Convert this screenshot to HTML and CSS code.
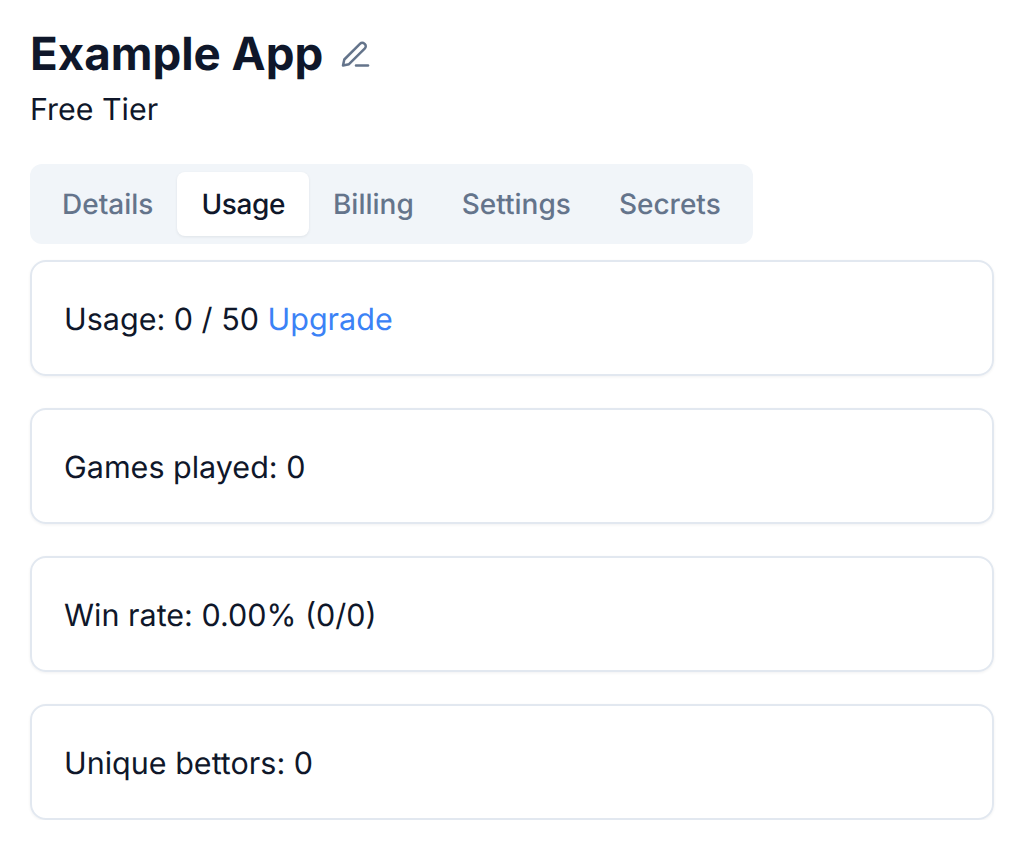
FILE: index.html
```html
<!DOCTYPE html>
<html lang="en">
<head>
<meta charset="utf-8">
<title>Example App</title>
<link rel="stylesheet" href="styles.css">
</head>
<body>
<main class="page">
  <header class="head">
    <div class="title-row">
      <h1 class="title">Example App</h1>
      <svg class="edit" width="30" height="30" viewBox="0 0 30 30" fill="none" stroke="#64748b" stroke-width="2.5" stroke-linecap="round" stroke-linejoin="round" aria-hidden="true">
        <path d="M3 26.5l1.3-6L20.2 4.6a2.9 2.9 0 0 1 4.1 0l.6.6a2.9 2.9 0 0 1 0 4.1L9 25.2z"/>
        <path d="M16 26.5h12"/>
      </svg>
    </div>
    <p class="tier">Free Tier</p>
  </header>
  <nav class="tabs">
    <a class="tab">Details</a>
    <a class="tab active">Usage</a>
    <a class="tab">Billing</a>
    <a class="tab">Settings</a>
    <a class="tab">Secrets</a>
  </nav>
  <section class="cards">
    <div class="card">Usage: 0 / 50 <a class="link">Upgrade</a></div>
    <div class="card">Games played: 0</div>
    <div class="card">Win rate: 0.00% (0/0)</div>
    <div class="card">Unique bettors: 0</div>
  </section>
</main>
</body>
</html>
```
FILE: styles.css
```css
* { box-sizing: border-box; }
html, body { margin: 0; background: #fff; }
body { font-family: Inter, "Liberation Sans", sans-serif; color: #0f172a; text-rendering: geometricPrecision; }
.page { padding: 24px 26px 0 30px; }
.title-row { display: flex; align-items: center; gap: 17px; height: 60px; padding-top: 2px; }
.title { margin: 0; font-size: 45.7px; line-height: 60px; font-weight: 700; }
.edit { margin-top: -2px; }
.tier { margin: 0; font-size: 30.4px; line-height: 52px; }
.tabs { display: inline-flex; margin-top: 28px; padding: 8px; background: #f1f5f9; border-radius: 12px; vertical-align: top; }
.tab { padding: 0 24px; height: 64px; line-height: 64px; font-size: 28px; font-weight: 500; color: #64748b; border-radius: 8px; }
.tab.active { background: #fff; color: #0f172a; letter-spacing: -.4px; box-shadow: 0 1px 3px rgba(15,23,42,.08); }
.cards { display: flex; flex-direction: column; gap: 32px; margin-top: 16px; }
.card { height: 116px; padding: 1px 32px 0; line-height: 114px; font-size: 30.5px; border: 2px solid #e2e8f0; border-radius: 16px; box-shadow: 0 1px 3px rgba(15,23,42,.06); }
.link { color: #3b82f6; }
```
